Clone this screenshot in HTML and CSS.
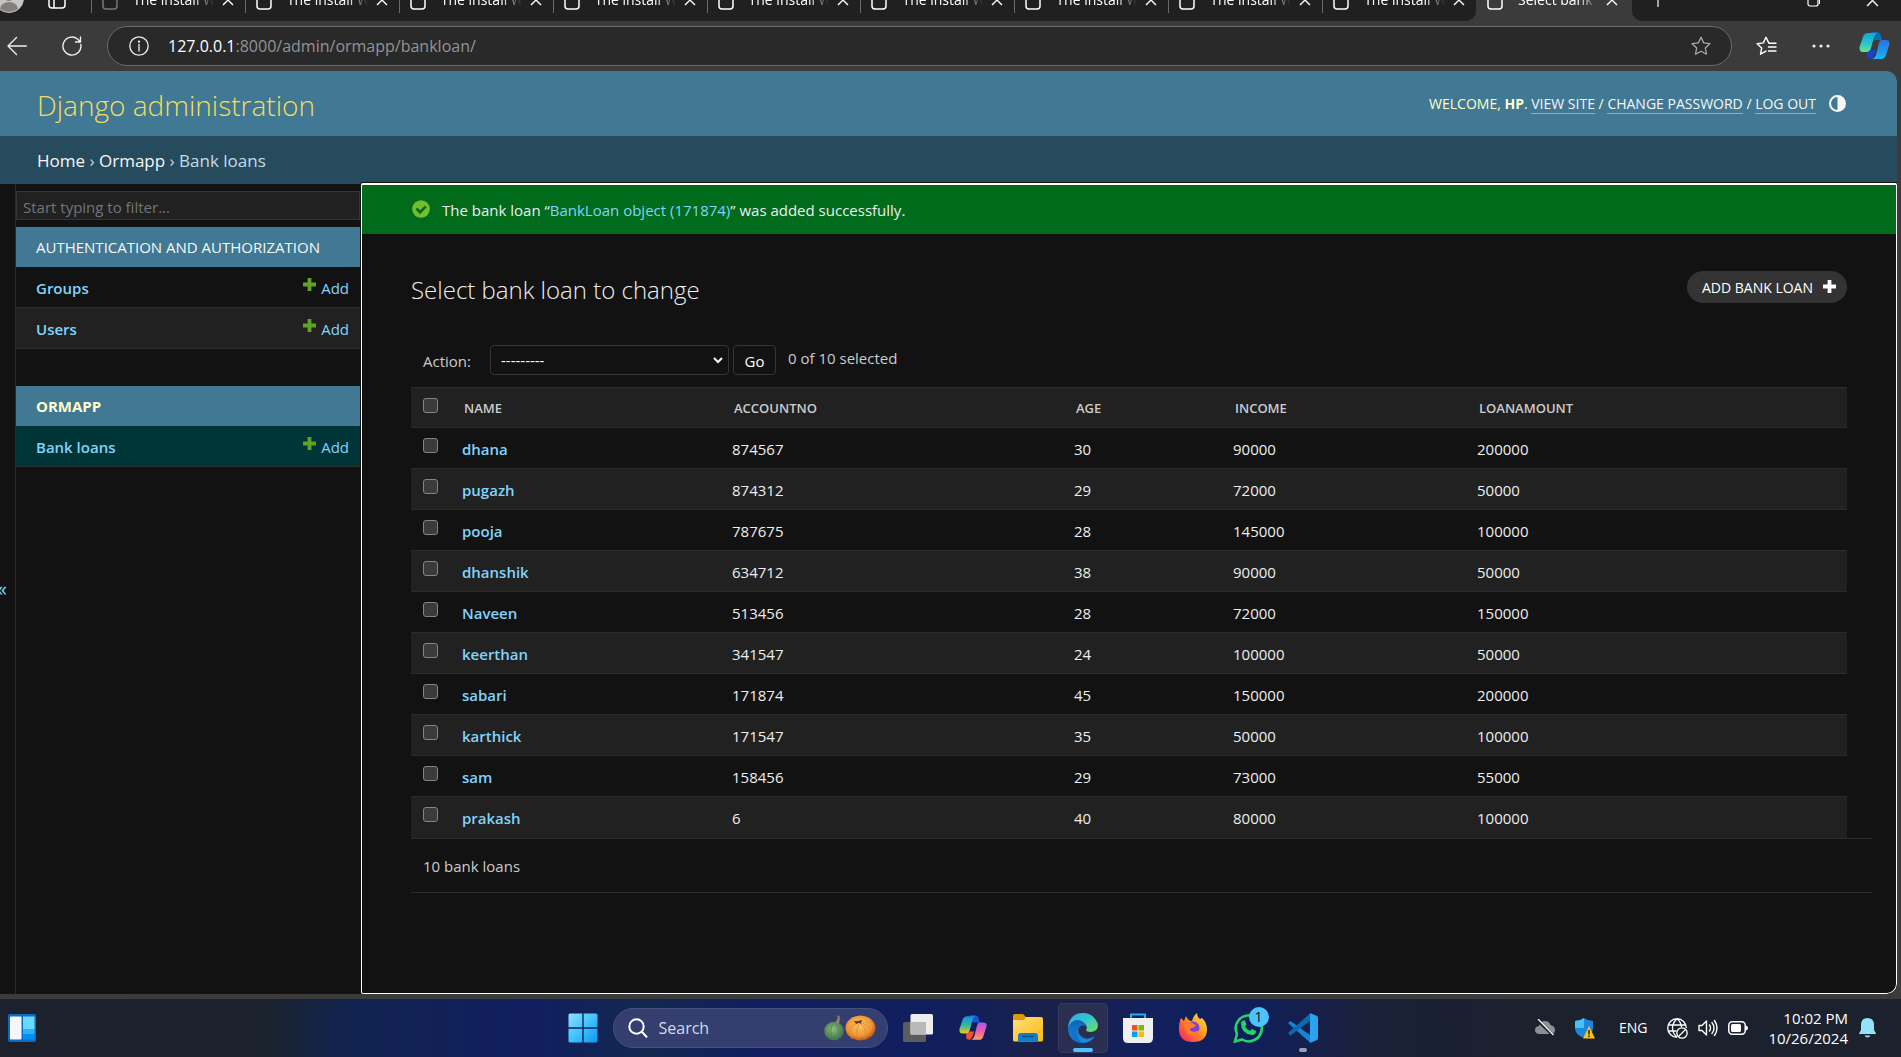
FILE: index.html
```html
<!DOCTYPE html>
<html lang="en">
<head>
<meta charset="utf-8">
<title>Select bank loan to change | Django site admin</title>
<link rel="stylesheet" href="styles.css">
</head>
<body>
<svg class="defs" width="0" height="0" aria-hidden="true">
  <defs>
    <symbol id="i-page" viewBox="0 0 16 20"><rect x="1" y="1" width="14" height="18" rx="3" fill="none" stroke="currentColor" stroke-width="1.5"/></symbol>
    <symbol id="i-x" viewBox="0 0 12 12"><path d="M1 1l10 10M11 1L1 11" fill="none" stroke="currentColor" stroke-width="1.4"/></symbol>
    <symbol id="i-plus" viewBox="0 0 13 13"><path d="M4.600 0h3.800v4.600H13v3.800H8.400V13H4.600V8.400H0V4.600h4.600z" fill="currentColor"/></symbol>
    <linearGradient id="g-cy" x1="0" y1="0" x2="0" y2="1"><stop offset="0" stop-color="#14a5e0"/><stop offset=".5" stop-color="#21c4cc"/><stop offset="1" stop-color="#6fe28a"/></linearGradient>
    <linearGradient id="g-bl" x1="0" y1="0" x2="0" y2="1"><stop offset="0" stop-color="#2b6fe0"/><stop offset="1" stop-color="#16b5fa"/></linearGradient>
    <linearGradient id="g-rain" x1="0" y1="0" x2="0" y2="1"><stop offset="0" stop-color="#1b8ee8"/><stop offset=".5" stop-color="#2fb6a0"/><stop offset="1" stop-color="#f0c81e"/></linearGradient>
    <linearGradient id="g-pink" x1="0" y1="0" x2="0" y2="1"><stop offset="0" stop-color="#a35cf0"/><stop offset=".5" stop-color="#ee5aa8"/><stop offset="1" stop-color="#ffa25a"/></linearGradient>
    <linearGradient id="g-win" x1="0" y1="0" x2="1" y2="1"><stop offset="0" stop-color="#8be0ff"/><stop offset=".5" stop-color="#41c3fb"/><stop offset="1" stop-color="#0c95ef"/></linearGradient>
    <linearGradient id="g-fold" x1="0" y1="0" x2="1" y2="1"><stop offset="0" stop-color="#ffdf78"/><stop offset="1" stop-color="#fbb917"/></linearGradient>
    <linearGradient id="g-edge" x1="0" y1="0" x2="1" y2="1"><stop offset="0" stop-color="#2aa6e6"/><stop offset=".5" stop-color="#38c6d0"/><stop offset="1" stop-color="#74e24f"/></linearGradient>
    <linearGradient id="g-edge2" x1="0" y1="0" x2="0" y2="1"><stop offset="0" stop-color="#0c62b5"/><stop offset="1" stop-color="#1a8fe2"/></linearGradient>
    <linearGradient id="g-fox" x1="1" y1="0" x2="0" y2="1"><stop offset="0" stop-color="#fff14f"/><stop offset=".45" stop-color="#ff9320"/><stop offset="1" stop-color="#f5156c"/></linearGradient>
    <radialGradient id="g-pump" cx=".45" cy=".4" r=".6"><stop offset="0" stop-color="#ffc56a"/><stop offset=".7" stop-color="#f09432"/><stop offset="1" stop-color="#b5521a"/></radialGradient>
    <radialGradient id="g-gourd" cx=".45" cy=".4" r=".6"><stop offset="0" stop-color="#8fbd7a"/><stop offset="1" stop-color="#3c7048"/></radialGradient>
  </defs>
</svg>

<header class="browser">
  <div class="tabstrip">
    <div class="strip-left">
      <svg class="avatar" viewBox="0 0 24 30"><circle cx="9" cy="13" r="15" fill="#c9c5c2"/><path d="M0 24a9 7 0 0 1 18 0a15 15 0 0 1-18 0z" fill="#837f7c"/><circle cx="9" cy="11" r="5" fill="#837f7c"/></svg>
      <svg class="tabmenu" viewBox="0 0 18 18"><rect x="1" y="1" width="16" height="16" rx="3" fill="none" stroke="#fff" stroke-width="1.500"/><path d="M6 1v16" stroke="#fff" stroke-width="1.500"/></svg>
      <button class="tab dim"><svg class="fav"><use href="#i-page"/></svg><span>The install W</span><svg class="close"><use href="#i-x"/></svg></button>
      <button class="tab"><svg class="fav"><use href="#i-page"/></svg><span>The install W</span><svg class="close"><use href="#i-x"/></svg></button>
      <button class="tab"><svg class="fav"><use href="#i-page"/></svg><span>The install W</span><svg class="close"><use href="#i-x"/></svg></button>
      <button class="tab"><svg class="fav"><use href="#i-page"/></svg><span>The install W</span><svg class="close"><use href="#i-x"/></svg></button>
      <button class="tab"><svg class="fav"><use href="#i-page"/></svg><span>The install W</span><svg class="close"><use href="#i-x"/></svg></button>
      <button class="tab"><svg class="fav"><use href="#i-page"/></svg><span>The install W</span><svg class="close"><use href="#i-x"/></svg></button>
      <button class="tab"><svg class="fav"><use href="#i-page"/></svg><span>The install W</span><svg class="close"><use href="#i-x"/></svg></button>
      <button class="tab"><svg class="fav"><use href="#i-page"/></svg><span>The install W</span><svg class="close"><use href="#i-x"/></svg></button>
      <button class="tab"><svg class="fav"><use href="#i-page"/></svg><span>The install W</span><svg class="close"><use href="#i-x"/></svg></button>
    </div>
    <button class="tab active"><svg class="fav"><use href="#i-page"/></svg><span>Select bank</span><svg class="close"><use href="#i-x"/></svg></button>
    <div class="strip-right">
      <svg class="newtab" viewBox="0 0 16 16"><path d="M8 0v16M0 8h16" stroke="#ddd" stroke-width="1.400"/></svg>
      <div class="winbtns">
        <svg viewBox="0 0 13 13"><rect x="1" y="3" width="10" height="9" rx="2" fill="none" stroke="#fff" stroke-width="1.200"/><path d="M4 1h6q2.500 0 2.500 2.500V10" fill="none" stroke="#fff"/></svg>
        <svg viewBox="0 0 12 12"><use href="#i-x"/></svg>
      </div>
    </div>
  </div>
  <div class="toolbar">
    <button class="tool" aria-label="Back"><svg width="20" height="20" viewBox="0 0 20 20" fill="none" stroke="#eee" stroke-width="1.400" stroke-linecap="round" stroke-linejoin="round"><path d="M19.300 10H1M9.500 1.500L1 10l8.500 8.500"/></svg></button>
    <button class="tool" aria-label="Refresh"><svg width="20" height="20" viewBox="0 0 20 20" fill="none" stroke="#eee" stroke-width="1.400" stroke-linecap="round" stroke-linejoin="round"><path d="M18.800 8.500A9 9 0 1 1 15.500 3L18 5.500M18.500 1v5h-5"/></svg></button>
    <div class="address">
      <svg width="20" height="20" viewBox="0 0 20 20" fill="none" stroke="#eee" stroke-width="1.300"><circle cx="10" cy="10" r="9.200"/><path d="M10 8.500V15" stroke-linecap="round"/><circle cx="10" cy="5.700" r=".5" fill="#eee"/></svg>
      <span class="url"><b>127.0.0.1</b>:8000/admin/ormapp/bankloan/</span>
      <svg width="20" height="20" viewBox="0 0 20 20" fill="none" stroke="#a8a8a8" stroke-width="1.300" stroke-linejoin="round"><path d="M10 1.200l2.700 5.700 6.200.8-4.600 4.300 1.200 6.200L10 15.200l-5.500 3 1.200-6.200L1.100 7.700l6.200-.8z"/></svg>
    </div>
    <div class="extras">
      <svg width="21" height="20" viewBox="0 0 21 20" fill="none" stroke="#fff" stroke-width="1.400" stroke-linejoin="round" stroke-linecap="round"><path d="M13.500 7L12.700 6.900 10 1.200 7.300 6.900l-6.200.8L5.700 12l-1.200 6.200L10 15.200M13 7.200h7M12.500 11h7.500M12.500 15h7.500"/></svg>
      <svg width="18" height="4" viewBox="0 0 18 4" fill="#eee"><circle cx="2" cy="2" r="1.600"/><circle cx="9" cy="2" r="1.600"/><circle cx="16" cy="2" r="1.600"/></svg>
      <svg width="31" height="28" viewBox="0 0 31 28"><path d="M8 18h9l-3 7q-1 2-3 2-3 0-3-3z" fill="#1b3fd0"/><path d="M12 0h6q3 0 4 4l1 4h-8z" fill="#0b6fb0"/><path d="M9 1h9q-2 1-3 4l-3 11q-1 4-5 4H4q-4 0-3.500-5L4 5Q5 1 9 1z" fill="url(#g-cy)"/><path d="M22 8h5q4 0 3.500 4L27 23q-1 4-5 4h-9q3-1 4-4l3-12q1-3 2-3z" fill="url(#g-bl)"/></svg>
    </div>
  </div>
</header>

<div class="frame">
  <div class="page">
    <header class="site">
      <a class="brand" href="#">Django administration</a>
      <div class="usertools">
        <span>WELCOME, <strong>HP</strong>. <a href="#">VIEW SITE</a> / <a href="#">CHANGE PASSWORD</a> / <a href="#">LOG OUT</a></span>
        <button class="theme" aria-label="Toggle theme"><svg width="17" height="17" viewBox="0 0 17 17"><circle cx="8.500" cy="8.500" r="7.500" fill="none" stroke="#f7f7f7" stroke-width="2"/><path d="M8.500 1a7.500 7.500 0 0 1 0 15z" fill="#f7f7f7"/></svg></button>
      </div>
    </header>
    <nav class="crumbs"><a href="#">Home</a> › <a href="#">Ormapp</a> › Bank loans</nav>
    <div class="columns">
      <button class="collapse" aria-label="Toggle navigation"><span>«</span></button>
      <nav class="sidebar">
        <input class="filter" type="text" placeholder="Start typing to filter..." aria-label="Filter navigation items">
        <section class="module">
          <h2><a href="#">AUTHENTICATION AND AUTHORIZATION</a></h2>
          <div class="model"><a class="name" href="#">Groups</a><a class="add" href="#"><svg><use href="#i-plus"/></svg>Add</a></div>
          <div class="model alt"><a class="name" href="#">Users</a><a class="add" href="#"><svg><use href="#i-plus"/></svg>Add</a></div>
        </section>
        <section class="module current">
          <h2><a href="#">ORMAPP</a></h2>
          <div class="model"><a class="name" href="#">Bank loans</a><a class="add" href="#"><svg><use href="#i-plus"/></svg>Add</a></div>
        </section>
      </nav>
      <main class="main">
        <div class="message">
          <svg width="18" height="18" viewBox="0 0 18 18"><circle cx="9" cy="9" r="8.800" fill="#70bf2b"/><path d="M4.500 8.500l3.500 3.800 5.800-6" fill="none" stroke="#006b1b" stroke-width="2.600"/></svg>
          <p>The bank loan “<a href="#">BankLoan object (171874)</a>” was added successfully.</p>
        </div>
        <div class="content">
          <div class="titlebar">
            <h1>Select bank loan to change</h1>
            <a class="addbtn" href="#">ADD BANK LOAN<svg><use href="#i-plus"/></svg></a>
          </div>
          <form class="actions">
            <label for="action">Action:</label>
            <span class="selectwrap">
              <select id="action"><option>---------</option><option>Delete selected bank loans</option></select>
              <svg width="10" height="7" viewBox="0 0 10 7"><path d="M1 1l4 4 4-4" fill="none" stroke="#fff" stroke-width="2"/></svg>
            </span>
            <button class="go" type="button">Go</button>
            <span class="counter">0 of 10 selected</span>
          </form>
          <table class="results">
            <colgroup><col class="c-check"><col class="c-name"><col class="c-acct"><col class="c-age"><col class="c-income"><col></colgroup>
            <thead><tr><th><input type="checkbox" aria-label="Select all"></th><th>NAME</th><th>ACCOUNTNO</th><th>AGE</th><th>INCOME</th><th>LOANAMOUNT</th></tr></thead>
            <tbody>
              <tr><td><input type="checkbox" aria-label="Select dhana"></td><td><a href="#">dhana</a></td><td>874567</td><td>30</td><td>90000</td><td>200000</td></tr>
              <tr><td><input type="checkbox" aria-label="Select pugazh"></td><td><a href="#">pugazh</a></td><td>874312</td><td>29</td><td>72000</td><td>50000</td></tr>
              <tr><td><input type="checkbox" aria-label="Select pooja"></td><td><a href="#">pooja</a></td><td>787675</td><td>28</td><td>145000</td><td>100000</td></tr>
              <tr><td><input type="checkbox" aria-label="Select dhanshik"></td><td><a href="#">dhanshik</a></td><td>634712</td><td>38</td><td>90000</td><td>50000</td></tr>
              <tr><td><input type="checkbox" aria-label="Select Naveen"></td><td><a href="#">Naveen</a></td><td>513456</td><td>28</td><td>72000</td><td>150000</td></tr>
              <tr><td><input type="checkbox" aria-label="Select keerthan"></td><td><a href="#">keerthan</a></td><td>341547</td><td>24</td><td>100000</td><td>50000</td></tr>
              <tr><td><input type="checkbox" aria-label="Select sabari"></td><td><a href="#">sabari</a></td><td>171874</td><td>45</td><td>150000</td><td>200000</td></tr>
              <tr><td><input type="checkbox" aria-label="Select karthick"></td><td><a href="#">karthick</a></td><td>171547</td><td>35</td><td>50000</td><td>100000</td></tr>
              <tr><td><input type="checkbox" aria-label="Select sam"></td><td><a href="#">sam</a></td><td>158456</td><td>29</td><td>73000</td><td>55000</td></tr>
              <tr><td><input type="checkbox" aria-label="Select prakash"></td><td><a href="#">prakash</a></td><td>6</td><td>40</td><td>80000</td><td>100000</td></tr>
            </tbody>
          </table>
          <p class="paginator">10 bank loans</p>
        </div>
      </main>
    </div>
  </div>
</div>

<footer class="taskbar">
  <div class="widgets">
    <svg width="28" height="28" viewBox="0 0 28 28"><rect width="28" height="28" rx="2" fill="#0a6cc4"/><rect x="2" y="2.500" width="11.500" height="23" rx="1" fill="#f5f7fa"/><rect x="15" y="2.500" width="11.500" height="12.500" fill="#66dbff"/><rect x="15" y="15" width="11.500" height="5.500" fill="#28b0ff"/><rect x="15" y="20.500" width="11.500" height="5" fill="#0090f5"/></svg>
  </div>
  <div class="apps">
    <button class="app" aria-label="Start"><svg width="30" height="30" viewBox="0 0 30 30" fill="url(#g-win)"><path d="M2 .5h12.300v13.800H.5V2Q.5.500 2 .5zM15.700.5H28q1.500 0 1.500 1.500v12.300H15.700zM.5 15.700h13.800v13.800H2q-1.500 0-1.500-1.500zM15.700 15.700h13.800V28q0 1.500-1.500 1.500H15.700z"/></svg></button>
    <label class="search">
      <svg width="20" height="20" viewBox="0 0 20 20" fill="none" stroke="#fff" stroke-width="2" stroke-linecap="round"><circle cx="8.500" cy="8.500" r="7.200"/><path d="M13.800 13.800L18.500 18.700"/></svg>
      <input type="text" placeholder="Search" aria-label="Search">
      <svg width="52" height="26" viewBox="0 0 52 26"><ellipse cx="10" cy="16" rx="9.800" ry="9.300" fill="url(#g-gourd)"/><path d="M10 7q-6 8-1 18M11 7q6 8 2 18" stroke="#4f8556" fill="none" stroke-width=".8"/><path d="M10 8q4-2 3.500-7l2-.5q1 6-1 9z" fill="#8f7f70"/><ellipse cx="36.500" cy="13" rx="15" ry="12.500" fill="url(#g-pump)"/><path d="M34 8q-12 4-6 16M35 9q-4 8 0 16M37 9q7 6 4 15M38 8q11 4 8 13" stroke="#e0852f" fill="none" stroke-width=".8"/><path d="M30 6l4 0 4-1-1 4-2-1-3 1z" fill="#5d4630"/></svg>
    </label>
    <button class="app" aria-label="Task view"><svg width="30" height="28" viewBox="0 0 30 28"><rect y="8" width="23" height="20" rx="1.500" fill="#5c5c5e"/><rect x="7.500" width="22.500" height="20.500" rx="1.500" fill="#ededef"/><rect x="7.500" y="8" width="15.500" height="12.500" fill="#b9b9bb"/></svg></button>
    <button class="app" aria-label="Copilot"><svg width="28" height="26" viewBox="0 0 31 28"><path d="M8 18h9l-3 7q-1 2-3 2-3 0-3-3z" fill="#f4502f"/><path d="M12 0h6q3 0 4 4l1 4h-8z" fill="#1557d6"/><path d="M9 1h9q-2 1-3 4l-3 11q-1 4-5 4H4q-4 0-3.500-5L4 5Q5 1 9 1z" fill="url(#g-rain)"/><path d="M22 8h5q4 0 3.500 4L27 23q-1 4-5 4h-9q3-1 4-4l3-12q1-3 2-3z" fill="url(#g-pink)"/></svg></button>
    <button class="app" aria-label="File Explorer"><svg width="30" height="28" viewBox="0 0 30 28"><path d="M0 2q0-2 2-2h8l3 3v5H0z" fill="#d99a0a"/><path d="M0 6h11l2-3h15q2 0 2 2v21q0 1.500-1.500 1.500h-27Q0 27.500 0 26z" fill="url(#g-fold)"/><path d="M5 27.500V22q0-3 3-3h14q3 0 3 3v5.500z" fill="#127cc9"/><path d="M9 22.500h12" stroke="#0a4f94" stroke-width="1.500"/></svg></button>
    <button class="app open" aria-label="Edge"><svg width="30" height="30" viewBox="0 0 30 30"><path d="M0 14Q1 5 11 7q7 1 7 6-5-2-7 2-2 5 3 9 5 4 13-1-4 7-12 7Q0 29 0 14z" fill="url(#g-edge2)"/><path d="M0 14Q2 0 15 0q10 0 14.500 10 2 8-6.500 9-6 0-4.500-3 1-2-1-5Q14 7 9 7 3 8 0 14z" fill="url(#g-edge)"/><path d="M10 14q-4 5-1 10 2 4 7 6Q4 30 3 20q0-6 7-6z" fill="#1272c8"/></svg><i></i></button>
    <button class="app" aria-label="Microsoft Store"><svg width="30" height="30" viewBox="0 0 30 30"><path d="M8 6V1.500h14V6" fill="none" stroke="#25aef0" stroke-width="2"/><path d="M0 5h30v20q0 5-5 5H5q-5 0-5-5z" fill="#f0f0f1"/><path d="M9 12h5.500v5.500H9z" fill="#f25022"/><path d="M15.500 12H21v5.500h-5.500z" fill="#7fba00"/><path d="M9 18.500h5.500V24H9z" fill="#00a4ef"/><path d="M15.500 18.500H21V24h-5.500z" fill="#ffb900"/></svg></button>
    <button class="app" aria-label="Firefox"><svg width="30" height="30" viewBox="0 0 30 30"><path d="M3 5l3 3 2-5q2 5 6 5 1-5 5-8 0 4 3 6l2-1q5 5 5 11 0 13-14 13T1 16Q1 9 3 5z" fill="url(#g-fox)"/><circle cx="15" cy="15" r="6.500" fill="#7b3fe4"/><path d="M6 9q4-2 8 1l4 2q-1 3-5 3-2 1 0 3 4 2 8-1-2 6-8 5-7-1-7-13z" fill="#ff7a2a"/></svg></button>
    <button class="app" aria-label="WhatsApp"><svg width="30" height="30" viewBox="0 0 30 30"><path d="M2 28.500l2-7.500A13 13 0 1 1 9 26.500z" fill="none" stroke="#25d366" stroke-width="2.600"/><path d="M10 7.500l2 0 1.500 4-1.500 2q2 3.500 5 4.500l2-2 4 2q0 4-4 4Q8 20.500 8 10.500q0-2 2-3z" fill="#25d366"/></svg><span class="badge">1</span></button>
    <button class="app" aria-label="Visual Studio Code"><svg width="30" height="30" viewBox="0 0 30 30"><path d="M0 10l2.500-2L22 22v7.500z" fill="#1285d6"/><path d="M0 20l2.500 2.500L22 8V.5z" fill="#0c69b0"/><path d="M22 0l7 3q1 .5 1 2v20q0 1.500-1 2l-7 3z" fill="#27a3f2"/></svg><i class="idle"></i></button>
  </div>
  <div class="tray">
    <svg width="20" height="18" viewBox="0 0 20 18"><path d="M5 15q-5 0-5-4 0-3.500 4-4 1-5 6-5 4 0 5.500 4Q20 7 20 11q0 4-4 4z" fill="#8b8f96"/><path d="M2 1l17 16" stroke="#1b212d" stroke-width="3"/><path d="M3 0l15.500 16" stroke="#f5f5f5" stroke-width="1.300"/></svg>
    <svg width="20" height="21" viewBox="0 0 20 21"><path d="M9 0q4 3 9 3v7q0 7-9 10Q0 17 0 10V3q5 0 9-3z" fill="#1e86dc"/><path d="M9 0v10H0V3q5 0 9-3z" fill="#45c1f2"/><path d="M14 8l6 12.500H8z" fill="#ffc20e"/><path d="M14 12v4.500M14 17.500V19" stroke="#222" stroke-width="1.500"/></svg>
    <span class="lang">ENG</span>
    <span class="status">
      <svg width="21" height="21" viewBox="0 0 21 21" fill="none" stroke="#fff" stroke-width="1.300"><path d="M19.300 10A9.300 9.300 0 1 0 10 19.300M1.500 7h17M1.500 13h8M10 .8Q5.500 5 5.500 10t4.500 9.300M10 .8Q14 4 14.500 9"/><circle cx="15" cy="15" r="5.200"/><path d="M11.500 18.500l7-7"/></svg>
      <svg width="20" height="18" viewBox="0 0 20 18" fill="none" stroke="#fff" stroke-width="1.400" stroke-linejoin="round" stroke-linecap="round"><path d="M1 6.500h3L8.500 2v14L4 11.500H1zM11.500 6q2 3 0 6M14 3.500q4 5.500 0 11M16.500 1.500q5 7.500 0 15"/></svg>
      <svg width="20" height="14" viewBox="0 0 20 14"><rect x=".8" y=".8" width="16.400" height="12.400" rx="3.500" fill="none" stroke="#fff" stroke-width="1.500"/><rect x="3" y="3" width="10" height="8" rx="1.500" fill="#fff"/><path d="M18 4.500q2 .5 2 2.500t-2 2.500z" fill="#fff"/></svg>
    </span>
    <div class="clock"><span>10:02 PM</span><span>10/26/2024</span></div>
    <svg width="17" height="20" viewBox="0 0 17 20" fill="#8fe3fb"><path d="M8.500 0q6 0 6.500 6v6l2 3.500V16H0v-.5L2 12V6Q2.500 0 8.500 0zM5.500 17.500h6q-1 2-3 2t-3-2z"/></svg>
  </div>
</footer>
</body>
</html>
```
FILE: styles.css
```css
* { box-sizing: border-box; }

body {
  margin: 0;
  min-height: 100vh;
  display: flex;
  flex-direction: column;
  background: #3b3b3b;
  color: #eee;
  font: 15px/20px "Open Sans", "Noto Sans", sans-serif;
}

a { color: #81d4fa; text-decoration: none; }
p, h1, h2 { margin: 0; }
svg { flex: none; display: block; }
button {
  padding: 0;
  border: 0;
  background: none;
  color: inherit;
  font: inherit;
}
.defs { position: absolute; }

/* Browser window */
.tabstrip {
  display: flex;
  align-items: flex-end;
  height: 21px;
  overflow: hidden;
}
.strip-left, .strip-right {
  display: flex;
  align-items: flex-end;
  height: 42px;
  min-width: 0;
  background: #202020;
}
.strip-left { flex: 1; border-radius: 0 0 10px 0; }
.strip-right { flex: 0 0 269px; border-radius: 0 0 0 10px; }
.avatar { width: 24px; height: 30px; margin-bottom: 6px; }
.tabmenu { width: 18px; height: 18px; margin: 0 25px 12px 24px; }
.tab {
  display: flex;
  flex: 1 1 0;
  align-items: center;
  min-width: 0;
  height: 42px;
  padding: 0 11px 0 0;
  color: #fff;
}
.tab::before {
  content: "";
  width: 1px;
  height: 26px;
  margin-right: 10px;
  background: #6a6a6a;
}
.tab .fav { width: 16px; height: 20px; margin-right: 15px; }
.tab span {
  flex: 1;
  overflow: hidden;
  text-align: left;
  white-space: nowrap;
  font-size: 14px;
  -webkit-mask-image: linear-gradient(to right, #000 75%, transparent);
  mask-image: linear-gradient(to right, #000 75%, transparent);
}
.tab .close { width: 12px; height: 12px; margin-left: 8px; }
.dim .fav { color: #777; }
.active { flex: 0 0 156px; padding-right: 14px; }
.active::before { background: transparent; }
.newtab { width: 16px; height: 16px; margin: 0 0 14px 18px; }
.winbtns { display: flex; gap: 46px; margin: 0 22px 14px auto; }
.winbtns svg { width: 13px; height: 13px; }

.toolbar {
  display: flex;
  align-items: center;
  height: 50px;
  padding: 0 11px 0 7px;
}
.tool { margin-right: 35px; }
.tool + .tool { margin-right: 25px; }
.address {
  display: flex;
  flex: 1;
  align-items: center;
  height: 40px;
  padding: 0 20px 0 21px;
  border: 1px solid #6b6b6b;
  border-radius: 20px;
  background: #292929;
}
.url { flex: 1; margin-left: 19px; color: #949494; font-size: 16px; }
.url b { color: #fff; font-weight: 400; }
.extras { display: flex; align-items: center; gap: 29px; margin-left: 24px; }
.extras svg:first-child { margin-right: 6px; }

.frame { display: flex; flex: 1; padding: 0 4px 5px 0; }
.page {
  display: flex;
  flex: 1;
  flex-direction: column;
  min-width: 0;
  overflow: hidden;
  border-radius: 0 10px 10px 0;
  background: #121212;
}

/* Site header */
.site {
  display: flex;
  align-items: center;
  justify-content: space-between;
  height: 65px;
  padding: 2px 51px 0 37px;
  background: #417893;
}
.brand { color: #f5dd5d; font-size: 28px; font-weight: 300; line-height: 36px; }
.usertools {
  display: flex;
  align-items: center;
  gap: 13px;
  padding-bottom: 2px;
  color: #ffc;
  font-size: 14px;
  line-height: 18px;
}
.usertools a { color: #f7f7f7; border-bottom: 1px solid #8eb0c0; }
.crumbs {
  height: 48px;
  padding: 15px 37px;
  background: #264b5d;
  color: #c4dce8;
  font-size: 17px;
}
.crumbs a { color: #f7f7f7; }

.columns { display: flex; flex: 1; }
.collapse {
  display: flex;
  align-items: center;
  justify-content: flex-end;
  width: 16px;
  overflow: hidden;
  border-right: 1px solid #2b2b2b;
  color: #81d4fa;
  font-size: 20px;
}
.collapse span { margin-right: 8px; }

/* Sidebar */
.sidebar { width: 345px; flex: none; padding: 7px 1px 0 0; }
.filter {
  display: block;
  width: 100%;
  height: 29px;
  padding: 2px 6px 0;
  border: 1px solid #353535;
  background: #212121;
  color: #eee;
  font: inherit;
}
.filter::placeholder { color: #757575; }
.module { margin: 7px 0 37px; }
.module h2 {
  height: 40px;
  padding: 0 20px;
  background: #417893;
  font-size: 15px;
  font-weight: 400;
  line-height: 40px;
}
.module h2 a { color: #f7f7f7; }
.current h2 { font-weight: 700; }
.current h2 a { color: #ffc; }
.model {
  display: flex;
  align-items: center;
  justify-content: space-between;
  height: 41px;
  padding: 1px 11px 0 20px;
  border-bottom: 1px solid #2b2b2b;
}
.model.alt { background: #212121; }
.current .model { background: #003538; }
.name { font-weight: 600; }
.add { display: flex; gap: 5px; }
.add svg { width: 13px; height: 13px; color: #5fa225; }

/* Main column */
.main {
  flex: 1;
  min-width: 0;
  margin-top: -1px;
  border: 1px solid #fff;
  border-top-width: 2px;
  border-radius: 2px 2px 10px 2px;
  box-shadow: 0 0 0 1px #121212;
}
.message {
  display: flex;
  gap: 12px;
  height: 49px;
  padding: 15px 50px;
  background: #006b1b;
}
.content { padding: 37px 49px 0; }
.titlebar { display: flex; align-items: flex-start; justify-content: space-between; }
h1 { font-size: 24px; font-weight: 300; line-height: 38px; }
.addbtn {
  display: flex;
  gap: 10px;
  height: 32px;
  padding: 9px 11px 0 15px;
  border-radius: 16px;
  background: #333;
  color: #fff;
  font-size: 14px;
  line-height: 16px;
}
.addbtn svg { width: 13px; height: 13px; }
.actions {
  display: flex;
  align-items: center;
  height: 30px;
  margin: 36px 0 12px;
  padding-left: 12px;
  color: #ccc;
}
.actions label { width: 67px; padding-top: 2px; }
.selectwrap { display: grid; align-items: center; width: 239px; }
.selectwrap > * { grid-area: 1 / 1; }
.selectwrap svg { justify-self: end; margin-right: 6px; pointer-events: none; }
.actions select, .go {
  height: 30px;
  border: 1px solid #353535;
  border-radius: 4px;
  background: #121212;
  color: #fff;
  font: inherit;
}
.actions select { appearance: none; padding: 0 10px; }
.go { width: 43px; margin: 0 12px 0 4px; padding-top: 2px; }
.counter { padding-bottom: 4px; }

.results { width: 100%; table-layout: fixed; border-collapse: collapse; }
.c-check { width: 41px; }
.c-name { width: 270px; }
.c-acct { width: 342px; }
.c-age { width: 159px; }
.c-income { width: 244px; }
.results th, .results td {
  height: 41px;
  padding: 1px 10px 0;
  border-top: 1px solid #2b2b2b;
  text-align: left;
}
.results th {
  height: 40px;
  padding-left: 12px;
  background: #212121;
  color: #ccc;
  font-size: 13px;
  font-weight: 600;
}
.results tr:nth-child(even) td { background: #212121; }
.results td a { font-weight: 600; }
.results th:first-child, .results td:first-child { padding: 0 0 5px 12px; }
.results input {
  appearance: none;
  display: block;
  width: 15px;
  height: 15px;
  margin: 0;
  border: 1px solid #858585;
  border-radius: 3px;
  background: #3b3b3b;
}
.paginator {
  margin-right: -25px;
  padding: 17px 12px 16px;
  border: solid #2b2b2b;
  border-width: 1px 0;
  color: #ccc;
}

/* Taskbar */
.taskbar {
  display: grid;
  grid-template-columns: 1fr auto 1fr;
  align-items: center;
  height: 58px;
  padding-right: 16px;
  background: linear-gradient(to right, #1d212d 0, #1b222e 14%, #12244e 18%, #101e60 28%, #13284f 34%, #101e60 40%, #101f5c 50%, #1a2048 55%, #12205c 60%, #101f5c 66%, #1a2038 72%, #1b212d 80%);
}
.widgets { padding-left: 8px; }
.apps { display: flex; align-items: center; gap: 5px; }
.app {
  position: relative;
  display: grid;
  place-items: center;
  width: 50px;
  height: 50px;
  border-radius: 5px;
}
.open { background: #2a2e50; box-shadow: inset 0 0 0 1px #373b5a; }
.app i {
  position: absolute;
  bottom: 1px;
  width: 20px;
  height: 4px;
  border-radius: 2px;
  background: #4cc2ff;
}
.app .idle { width: 8px; background: #9a9fb0; }
.badge {
  position: absolute;
  top: 4px;
  right: 4px;
  width: 20px;
  height: 20px;
  border-radius: 10px;
  background: #4cc2ff;
  color: #111;
  font-size: 14px;
}
.search {
  display: flex;
  align-items: center;
  width: 275px;
  height: 40px;
  padding: 0 11px 0 14px;
  border: 1px solid #46507d;
  border-radius: 20px;
  background: #343f70;
}
.search input {
  flex: 1;
  min-width: 0;
  margin-left: 11px;
  padding: 0;
  border: 0;
  background: none;
  font-family: inherit;
  font-size: 16px;
}
.search input::placeholder { color: #d5d9e6; }
.tray { display: flex; align-items: center; justify-content: flex-end; gap: 20px; padding-right: 9px; color: #fff; }
.lang { padding-left: 4px; font-size: 14px; }
.status { display: flex; align-items: center; gap: 10px; }
.clock { display: grid; margin-right: -9px; text-align: right; }
```
